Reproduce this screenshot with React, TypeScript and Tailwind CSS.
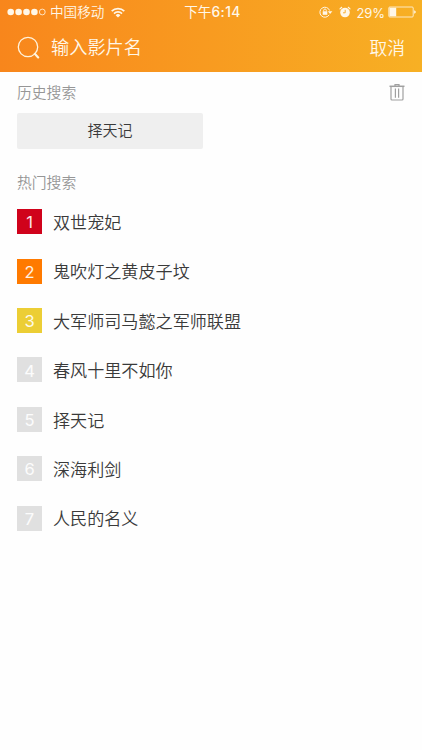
import React from "react";

type Movie = { title: string; badge: string };

const movies: Movie[] = [
  { title: "双世宠妃", badge: "bg-[#d0021b]" },
  { title: "鬼吹灯之黄皮子坟", badge: "bg-[#ff7a00]" },
  { title: "大军师司马懿之军师联盟", badge: "bg-[#ecce35]" },
  { title: "春风十里不如你", badge: "bg-[#e0e0e0]" },
  { title: "择天记", badge: "bg-[#e0e0e0]" },
  { title: "深海利剑", badge: "bg-[#e0e0e0]" },
  { title: "人民的名义", badge: "bg-[#e0e0e0]" },
];

function StatusBar() {
  return (
    <div className="flex h-6 items-center justify-between pl-[7px] pr-[6px] text-[13.6px] leading-6">
      <div className="flex w-[140px] items-center">
        <svg width="39" height="8" viewBox="0 0 39 8" fill="#fff7e8">
          <circle cx="3.7" cy="4" r="3.3" />
          <circle cx="11.6" cy="4" r="3.3" />
          <circle cx="19.5" cy="4" r="3.3" />
          <circle cx="27.4" cy="4" r="3.3" />
          <circle cx="35.3" cy="4" r="2.9" fill="none" stroke="#fff7e8" strokeWidth=".8" />
        </svg>
        <span className="relative -top-px ml-[4px]">中国移动</span>
        <svg className="ml-[7px]" width="14" height="11" viewBox="0 0 14 11" fill="none" stroke="#fff7e8" strokeWidth="1.7">
          <path d="M.7 4.1a9 9 0 0 1 12.6 0M3 6.6a5.7 5.7 0 0 1 8 0" />
          <path d="M4.6 8.2a3.4 3.4 0 0 1 4.8 0L7 10.6z" fill="#fff7e8" stroke="none" />
        </svg>
      </div>
      <div className="flex items-center whitespace-nowrap pl-[2px]">
        <span className="relative -top-px font-normal">下午</span>
        <span className="font-[Inter] text-[13.8px] font-medium tracking-[0.4px]">6:14</span>
      </div>
      <div className="flex w-[140px] items-center justify-end">
        <svg width="14" height="12" viewBox="0 0 14 12" fill="none" stroke="#fff7e8">
          <path d="M10.2 8.8A5 5 0 1 1 10.6 4.5" />
          <path d="M8.8 5.3h4.6L11.1 8z" fill="#fff7e8" stroke="none" />
          <rect x="3.7" y="5.3" width="4.6" height="3.5" fill="#fff7e8" stroke="none" />
          <path d="M4.7 5.5V4.3a1.3 1.3 0 0 1 2.6 0v1.2" strokeWidth=".9" />
        </svg>
        <svg className="ml-[6px]" width="12" height="12" viewBox="0 0 12 12">
          <circle cx="6" cy="6.5" r="4.8" fill="#fff7e8" />
          <path d="M1 2.9 2.7 1.3M9.3 1.3 11 2.9" stroke="#fff7e8" strokeWidth="1.2" strokeLinecap="round" />
          <path d="M6.2 3.8v3H4" fill="none" stroke="#f6a823" strokeWidth=".9" />
        </svg>
        <span className="ml-[6px] pt-px font-[Inter] text-[13px] font-normal tracking-[-0.1px]">29%</span>
        <svg className="ml-[3px]" width="28" height="12" viewBox="0 0 28 12">
          <rect x=".8" y="1" width="24.4" height="10" rx="1" fill="none" stroke="#fff7e8" strokeWidth=".8" />
          <rect x="1.4" y="1.7" width="6.8" height="8.6" fill="#fff7e8" />
          <path d="M26.2 4.2q1.6.5 1.6 1.8t-1.6 1.8z" fill="#fff7e8" />
        </svg>
      </div>
    </div>
  );
}

function TrashIcon() {
  return (
    <svg width="16" height="17" viewBox="0 0 16 17" fill="none" stroke="#a0a0a0" strokeWidth="1.2">
      <path d="M.5 2.3h15" strokeWidth="1.5" />
      <path d="M6 2V.7h4V2M2 2.8V15q0 1 1 1h10q1 0 1-1V2.8M6.4 4.5v9.3M9.6 4.5v9.3" />
    </svg>
  );
}

export default function App() {
  return (
    <div className="h-[750px] w-full overflow-hidden bg-[#fefefe] font-['Noto_Sans_CJK_SC',sans-serif] font-[350] text-[#3a3a3a]">
      <header className="h-[72px] bg-linear-to-r from-[#f8861c] via-[#f89b20] to-[#f7b024] text-[#fff7e8]">
        <StatusBar />
        <div className="flex h-[46px] items-center pl-[17px] pr-[17px]">
          <svg width="23" height="23" viewBox="0 0 23 23" fill="none" stroke="#fff3dc">
            <circle cx="11" cy="11" r="9.7" strokeWidth="1.3" />
            <path d="m17.8 17.8 3.4 3.6" strokeWidth="2.2" strokeLinecap="round" />
          </svg>
          <span className="ml-[11px] flex-1 text-[18.2px]">输入影片名</span>
          <button className="text-[17.8px] font-[350]">取消</button>
        </div>
      </header>
      <main className="px-[17px]">
        <div className="flex h-[40.5px] items-center justify-between">
          <h2 className="text-[14.8px] text-[#969696]">历史搜索</h2>
          <TrashIcon />
        </div>
        <button className="block h-[36px] w-[186px] rounded-[2px] bg-[#efefef] text-[15px] font-[350]">择天记</button>
        <h2 className="mt-[21px] text-[14.8px] leading-6 text-[#969696]">热门搜索</h2>
        <ol className="mt-[3.4px]">
          {movies.map((movie, index) => (
            <li key={movie.title} className="flex h-[49.45px] items-center">
              <span className={`flex h-[25px] w-[25px] items-center justify-center pt-[2px] font-[Inter] text-[16.5px] font-normal text-white/90 ${movie.badge}`}>
                {index + 1}
              </span>
              <span className="ml-[11px] text-[17.1px]">{movie.title}</span>
            </li>
          ))}
        </ol>
      </main>
    </div>
  );
}
